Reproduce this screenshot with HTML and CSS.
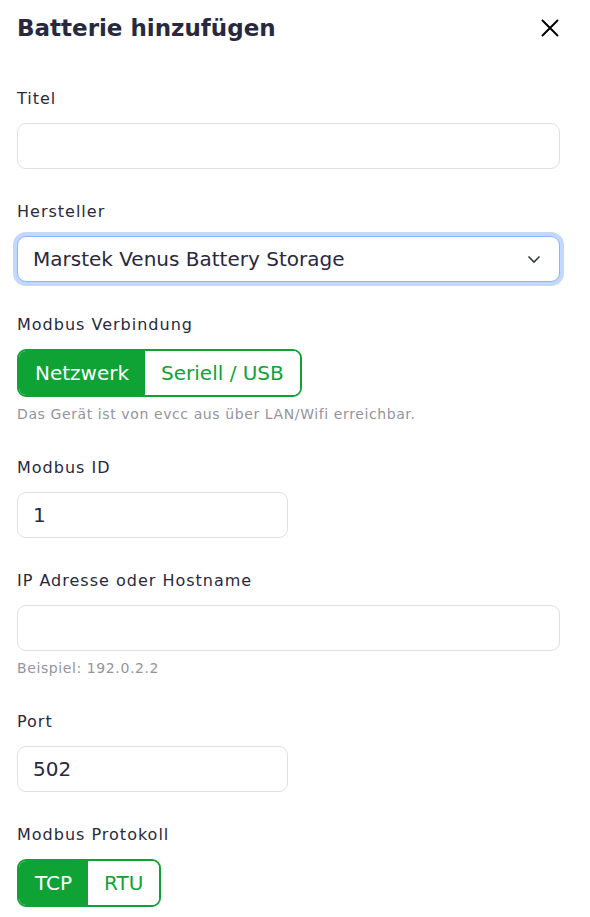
FILE: index.html
```html
<!DOCTYPE html>
<html lang="de">
<head>
<meta charset="utf-8">
<title>Batterie hinzufügen</title>
<link rel="stylesheet" href="styles.css">
</head>
<body>
<div class="modal">
  <div class="header">
    <h1 class="title">Batterie hinzufügen</h1>
    <button class="close" aria-label="Schließen">
      <svg width="20" height="20" viewBox="0 0 20 20"><path d="M2 2 L18 18 M18 2 L2 18" stroke="#000" stroke-width="2" fill="none"/></svg>
    </button>
  </div>

  <div class="group">
    <label class="label">Titel</label>
    <div class="input"></div>
  </div>

  <div class="group">
    <label class="label">Hersteller</label>
    <div class="input select focus">
      <span>Marstek Venus Battery Storage</span>
      <svg class="chev" width="14" height="9" viewBox="0 0 14 9"><path d="M1.5 1.5 L7 7 L12.5 1.5" stroke="#343a40" stroke-width="1.6" fill="none"/></svg>
    </div>
  </div>

  <div class="group">
    <label class="label">Modbus Verbindung</label>
    <div class="toggle">
      <span class="opt active">Netzwerk</span>
      <span class="opt">Seriell / USB</span>
    </div>
    <div class="help">Das Gerät ist von evcc aus über LAN/Wifi erreichbar.</div>
  </div>

  <div class="group">
    <label class="label">Modbus ID</label>
    <div class="input half">1</div>
  </div>

  <div class="group">
    <label class="label">IP Adresse oder Hostname</label>
    <div class="input"></div>
    <div class="help">Beispiel: 192.0.2.2</div>
  </div>

  <div class="group">
    <label class="label">Port</label>
    <div class="input half">502</div>
  </div>

  <div class="group">
    <label class="label">Modbus Protokoll</label>
    <div class="toggle">
      <span class="opt active">TCP</span>
      <span class="opt">RTU</span>
    </div>
  </div>
</div>
</body>
</html>
```

FILE: styles.css
```css
* { box-sizing: border-box; }
html, body { margin: 0; background: #fff; }
body {
  font-family: "DejaVu Sans", "Noto Sans", sans-serif;
  color: #28293e;
  overflow: hidden;
}
.modal {
  padding: 11px 30px 0 17px;
}
.header {
  display: flex;
  justify-content: space-between;
  align-items: center;
  margin-bottom: 42px;
}
.title {
  margin: 0;
  font-size: 23px;
  font-weight: 700;
  line-height: 34px;
  color: #28293e;
}
.close {
  border: 0;
  background: none;
  padding: 0;
  width: 20px;
  height: 20px;
  display: flex;
}
.group {
  display: flex;
  flex-direction: column;
  align-items: flex-start;
  margin-bottom: 31px;
}
.label {
  font-size: 16px;
  letter-spacing: 1px;
  line-height: 24px;
  margin-bottom: 12px;
  color: #28293e;
}
.input {
  width: 100%;
  height: 46px;
  border: 1px solid #dfe0e3;
  border-radius: 9px;
  padding: 0 15px;
  display: flex;
  align-items: center;
  font-size: 20px;
  color: #28293e;
  background: #fff;
}
.input.half { width: 271px; }
.select {
  justify-content: space-between;
  padding-right: 18px;
}
.select.focus {
  border-color: #86b7fe;
  box-shadow: 0 0 0 4px #c2d8fd;
}
.toggle {
  display: inline-flex;
  border: 2px solid #0fa336;
  border-radius: 9px;
  overflow: hidden;
  height: 48px;
}
.opt {
  display: flex;
  align-items: center;
  padding: 0 16px;
  font-size: 20px;
  color: #0fa336;
  background: #fff;
}
.opt.active {
  background: #0fa336;
  color: #fff;
}
.help {
  margin-top: 7px;
  font-size: 14px;
  letter-spacing: 0.6px;
  line-height: 21px;
  color: #93949e;
}
```
